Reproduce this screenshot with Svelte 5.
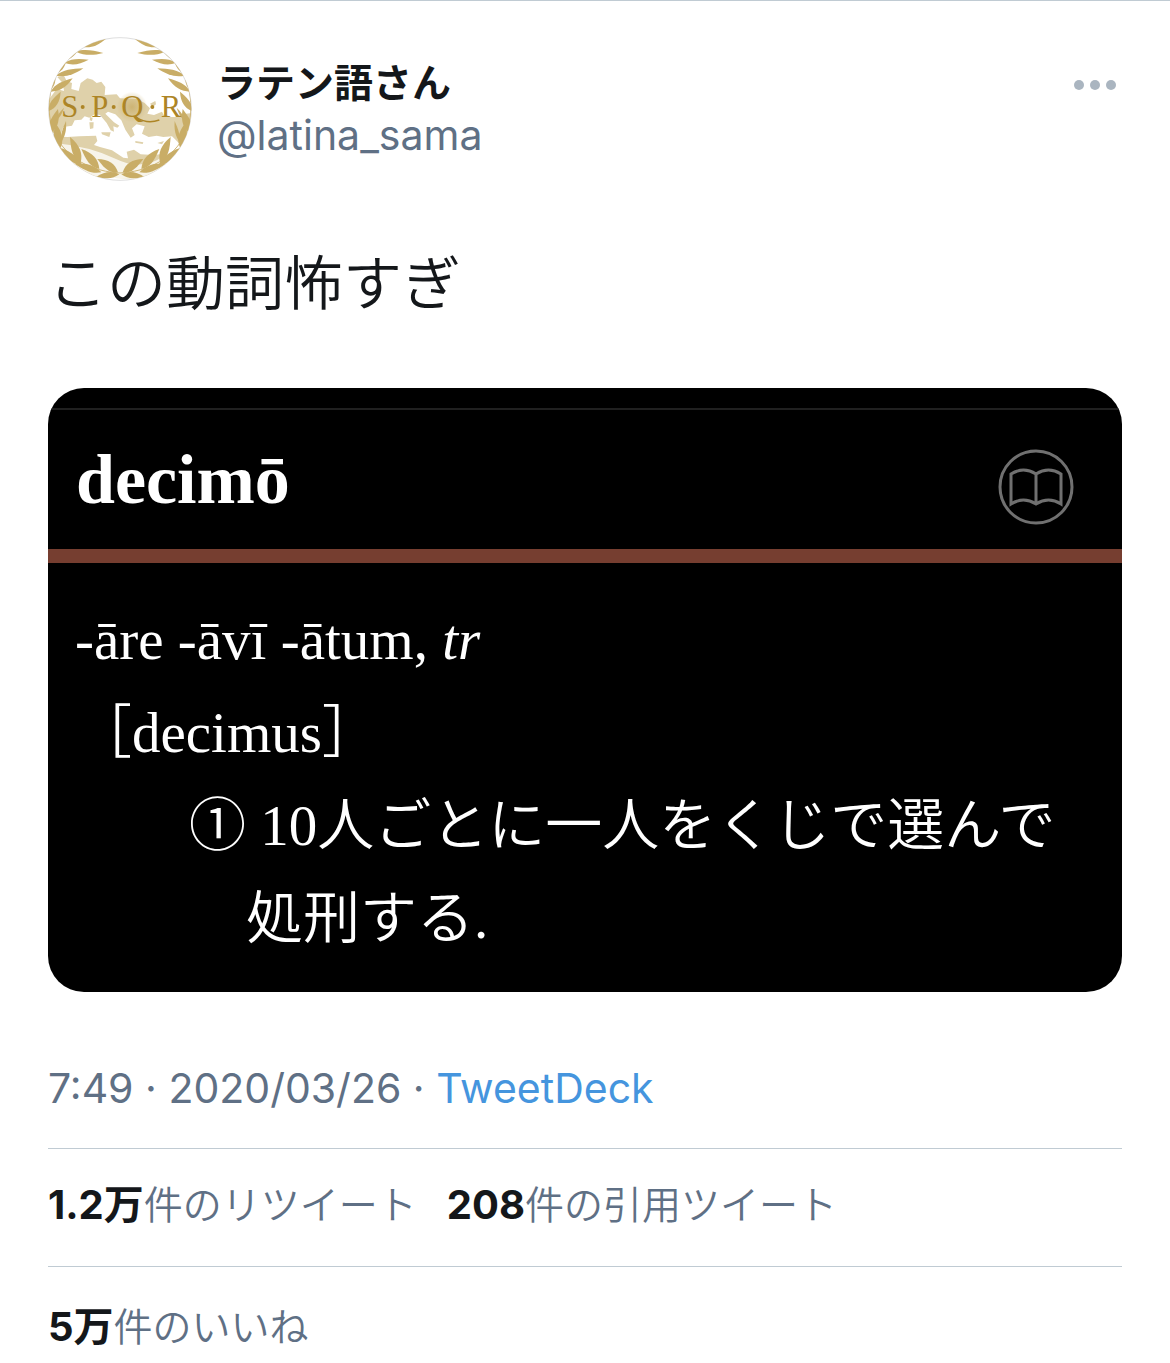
<script>
  // each leaf: stem x/y, tip x/y, thickness
  const leaves = [
    [130, 52, 198, 27, 20], [108, 66, 190, 70, 18], [74, 100, 146, 90, 20],
    [84, 90, 124, 46, 12], [48, 138, 130, 116, 22], [54, 130, 80, 88, 14],
    [32, 186, 98, 146, 24], [32, 180, 46, 136, 14], [26, 244, 62, 186, 26],
    [28, 314, 54, 238, 32], [46, 274, 72, 234, 10],
    [58, 362, 46, 280, 34], [64, 336, 78, 274, 14], [128, 408, 44, 350, 28],
    [122, 400, 90, 322, 32], [184, 428, 104, 402, 26], [178, 418, 124, 358, 32],
    [238, 434, 168, 442, 24], [234, 428, 172, 388, 32]
  ];

  // widest close to the stem, narrowing to a point
  function leafPath([x1, y1, x2, y2, w]) {
    const dx = x2 - x1;
    const dy = y2 - y1;
    const len = Math.hypot(dx, dy);
    const nx = (-dy / len) * w * 0.56;
    const ny = (dx / len) * w * 0.56;
    const ax = x1 + dx * 0.3;
    const ay = y1 + dy * 0.3;
    const bx = x1 + dx * 0.6;
    const by = y1 + dy * 0.6;
    return `M${x1} ${y1}C${ax + nx} ${ay + ny} ${bx + nx} ${by + ny} ${x2} ${y2}C${bx - nx * 0.6} ${by - ny * 0.6} ${ax - nx} ${ay - ny} ${x1} ${y1}Z`;
  }

  const retweets = '1.2万';
  const quotes = '208';
  const likes = '5万';
</script>

<article class="tweet">
  <header>
    <svg class="avatar" viewBox="24 22 432 432" role="img" aria-label="S·P·Q·R">
      <defs>
        <clipPath id="round"><circle cx="240" cy="238" r="214" /></clipPath>
        <radialGradient id="glow"><stop offset="0" stop-color="#cdb474" /><stop offset="1" stop-color="#cdb474" stop-opacity="0" /></radialGradient>
      </defs>
      <circle cx="240" cy="238" r="214" fill="#fff" stroke="#dedede" stroke-width="3" />
      <g clip-path="url(#round)">
        <g fill="#dfd1aa">
          <path d="M52 142L72 138 80 154 96 160 94 178 116 184 122 160 142 146 158 150 170 160 184 156 196 172 194 196 230 194 240 206 290 208 314 220 330 236 322 252 342 256 366 246 374 262 404 262 426 254 456 250 444 316 420 344 396 320 370 322 350 318 326 322 306 312 314 290 290 284 276 296 284 316 272 324 256 300 244 272 226 254 204 246 196 252 222 278 238 288 232 294 220 290 222 306 212 302 200 280 180 256 164 254 148 264 134 260 124 270 104 272 96 288 70 292 62 316 38 310 24 280 26 210 50 178 72 184 68 160Z" />
          <path d="M44 320L82 322 118 320 168 318 172 334 162 346 180 352 216 362 250 384 264 386 260 366 282 360 302 374 340 376 372 372 376 410 330 450 120 440 60 370Z" />
          <path d="M150 262L158 264 156 274 149 272ZM148 278L161 278 160 296 150 298ZM184 308L212 308 208 322 186 314ZM286 334L310 338 308 343 286 339ZM352 340L372 334 366 344Z" />
          <path d="M330 222L346 214 348 224 338 232Z" />
        </g>
        <circle cx="276" cy="232" r="46" fill="url(#glow)" />
        <path d="M44 340Q150 350 228 388T372 378L376 410 330 450 120 440 60 370Z" fill="#fff" opacity=".75" />
        <path d="M160 26C60 70 22 166 28 250M28 250C36 350 120 424 240 430C360 424 444 350 452 250M452 250C458 166 420 70 320 26" fill="none" stroke="#cfb678" stroke-width="3" />
        <g fill="#c9ad66">
          {#each leaves as leaf}
            <path d={leafPath(leaf)} />
            <path d={leafPath(leaf)} transform="translate(482 0) scale(-1 1)" />
          {/each}
        </g>
      </g>
      <text class="motto" x="64" y="262">S</text>
      <text class="motto" x="154" y="262">P</text>
      <text class="motto" x="244" y="262">Q</text>
      <text class="motto" x="362" y="262">R</text>
      <path d="M290 264Q322 284 358 271" fill="none" stroke="#ad8526" stroke-width="4" />
      <g fill="#ad8526"><circle cx="128" cy="232" r="6" /><circle cx="221" cy="232" r="6" /><circle cx="337" cy="232" r="6" /></g>
    </svg>
    <div class="names">
      <strong>ラテン語さん</strong>
      <a class="handle" href="#latina_sama">@latina_sama</a>
    </div>
    <button class="more" aria-label="もっと見る">
      <svg viewBox="0 0 42 10"><circle cx="5" cy="5" r="5" /><circle cx="21" cy="5" r="5" /><circle cx="37" cy="5" r="5" /></svg>
    </button>
  </header>

  <p class="text">この動詞怖すぎ</p>

  <section class="card">
    <div class="entry-head">
      <h1>decimō</h1>
      <svg class="book" viewBox="0 0 76 76" fill="none" stroke="#707070" stroke-width="3">
        <circle cx="38" cy="38" r="36" />
        <path d="M13 55V25C21 20 30 20 38 25C46 20 55 20 63 25V55C55 50 46 50 38 55C30 50 21 50 13 55ZM38 25V55" />
      </svg>
    </div>
    <div class="entry">
      <p>-āre -āvī -ātum, <em>tr</em></p>
      <p>［decimus］</p>
      <p class="meaning">① 10人ごとに一人をくじで選んで処刑する.</p>
    </div>
  </section>

  <p class="meta">7:49 · 2020/03/26 · <a href="#tweetdeck">TweetDeck</a></p>

  <div class="stats">
    <span><b>{retweets}</b>件のリツイート</span>
    <span><b>{quotes}</b>件の引用ツイート</span>
  </div>
  <div class="stats likes">
    <span><b>{likes}</b>件のいいね</span>
  </div>
</article>

<style>
  :global(body) {
    margin: 0;
    background: #fff;
  }
  .tweet {
    padding: 36px 48px 0;
    border-top: 1px solid #c0cbd3;
    font-family: Inter, "Noto Sans CJK JP", sans-serif;
    color: #14171a;
  }
  p,
  h1 {
    margin: 0;
  }
  a {
    text-decoration: none;
  }
  header {
    display: flex;
    align-items: flex-start;
  }
  .avatar {
    width: 144px;
    height: 144px;
    flex: none;
  }
  .motto {
    font-family: "Liberation Serif", serif;
    font-size: 92px;
    fill: #ad8526;
  }
  .names {
    display: flex;
    flex: 1;
    flex-direction: column;
    margin: 20px 0 0 25px;
  }
  .names strong {
    font-size: 39px;
    line-height: 52px;
  }
  .handle {
    font-size: 41px;
    line-height: 52px;
    color: #5f7085;
  }
  .more {
    margin: 43px 6px 0 0;
    padding: 0;
    border: 0;
    background: none;
    line-height: 0;
    cursor: pointer;
  }
  .more svg {
    width: 42px;
    height: 10px;
    fill: #aab5c0;
  }
  .text {
    margin-top: 63px;
    font-size: 59px;
    font-weight: 350;
    line-height: 80px;
  }
  .card {
    margin-top: 64px;
    padding-top: 20px;
    border-radius: 36px;
    overflow: hidden;
    background: #000;
    color: #fff;
    font-family: "Liberation Serif", "Noto Sans CJK JP", serif;
  }
  .entry-head {
    display: flex;
    align-items: flex-start;
    justify-content: space-between;
    padding: 0 48px 0 28px;
    border-top: 2px solid #202020;
    border-bottom: 14px solid #763e30;
  }
  h1 {
    margin: 30px 0 29px;
    font-size: 70px;
    line-height: 80px;
  }
  .book {
    width: 76px;
    height: 76px;
    margin-top: 39px;
  }
  .entry {
    padding: 30px 48px 27px 27px;
    font-size: 57px;
    font-weight: 350;
    line-height: 93px;
  }
  .meaning {
    padding-left: 171px;
    text-indent: -57px;
  }
  .meta {
    margin-top: 64px;
    padding-bottom: 28px;
    font-size: 41px;
    line-height: 64px;
    color: #5f7085;
  }
  .meta a {
    color: #4595de;
  }
  .stats {
    display: flex;
    gap: 30px;
    padding: 24px 0 29px;
    border-top: 1px solid #c0cbd3;
    font-size: 39px;
    font-weight: 350;
    line-height: 64px;
    color: #5f7085;
  }
  .likes {
    padding: 28px 0 0;
  }
  .stats b {
    font-size: 40px;
    font-weight: 700;
    color: #14171a;
  }
</style>
